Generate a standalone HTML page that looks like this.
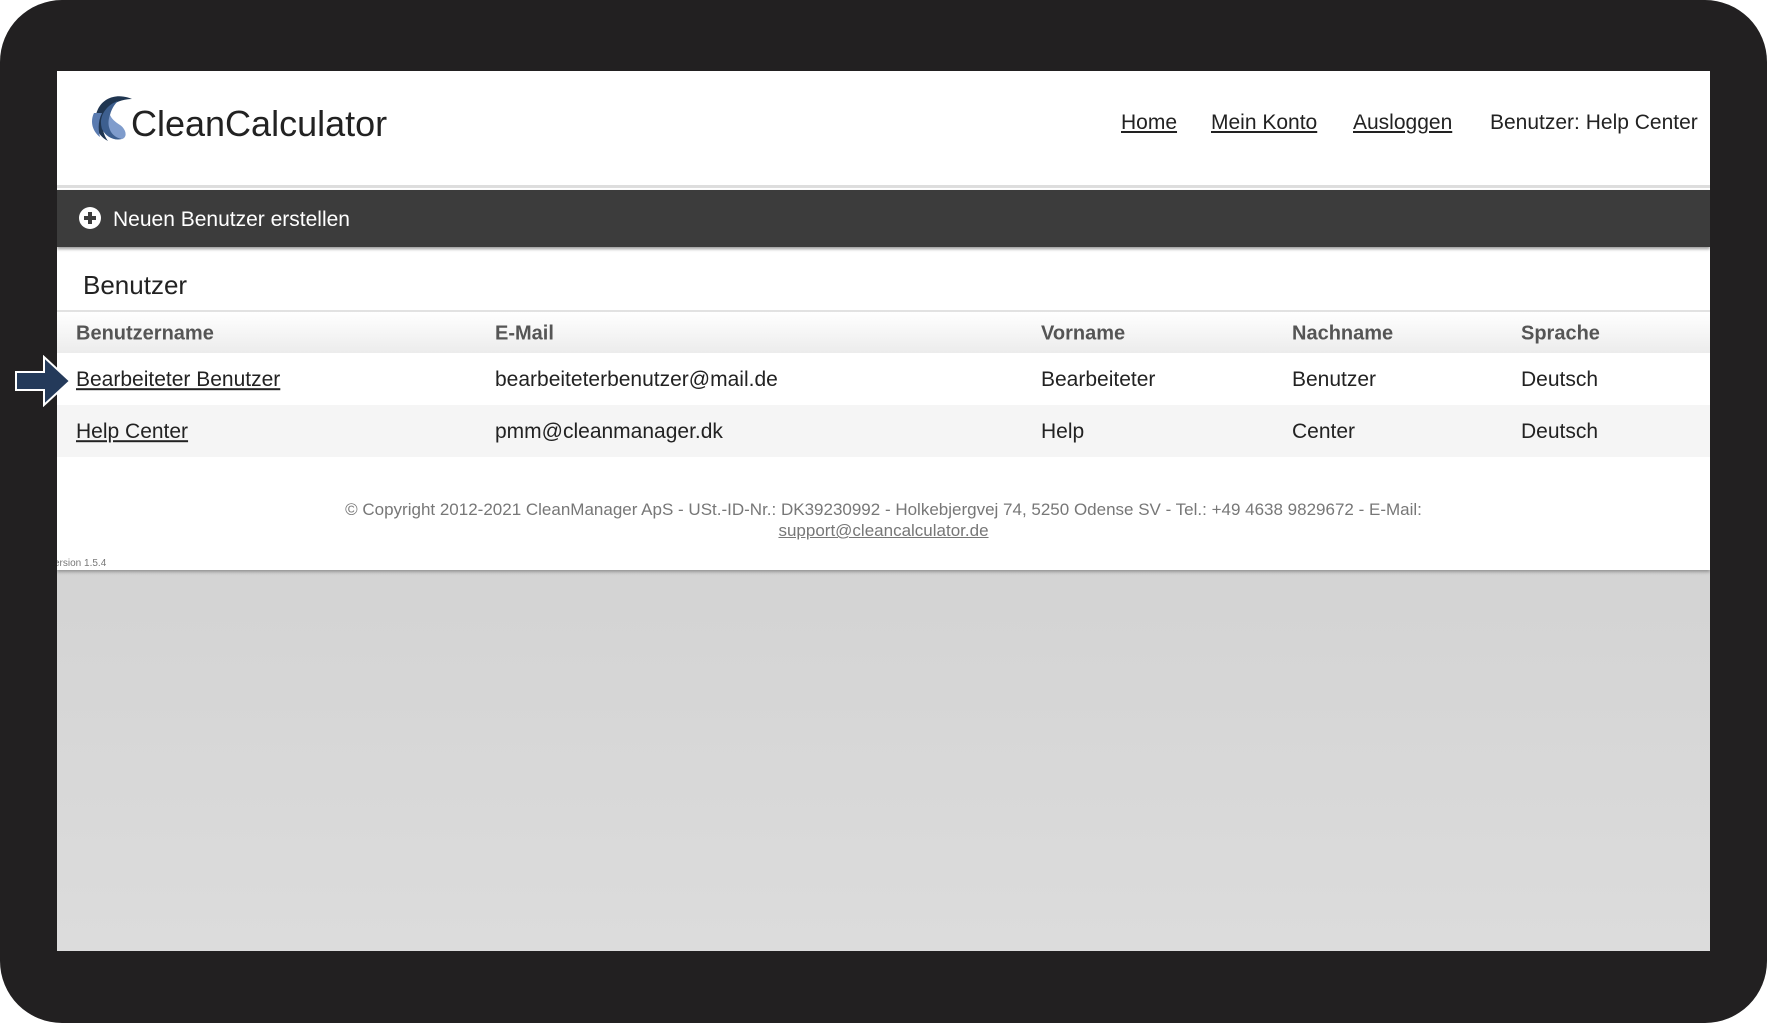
<!DOCTYPE html>
<html><head><meta charset="utf-8"><style>
*{margin:0;padding:0;box-sizing:border-box}
body{width:1767px;height:1023px;background:#fff;font-family:"Liberation Sans",sans-serif;overflow:hidden;position:relative}
.frame{position:absolute;left:0;top:0;width:1767px;height:1023px;background:#222021;border-radius:62px}
.panel{position:absolute;left:57px;top:71px;width:1653px;height:880px;background:linear-gradient(#c8c8c8,#dcdcdc);overflow:hidden}
.white{position:absolute;left:0;top:0;width:100%;height:499px;background:#fff;box-shadow:0 2px 3px rgba(0,0,0,.3)}
.hdr{position:absolute;left:0;top:0;width:100%;height:117px;border-bottom:3px solid #ddd}
.logo{position:absolute;left:74px;top:32px;font-size:36px;color:#222}
.nav{position:absolute;top:40px;font-size:21px;color:#222}
.nav a{color:#222;text-decoration:underline}
.bar{position:absolute;left:0;top:119px;width:100%;height:57px;background:#3c3c3c;color:#fff;font-size:21px;box-shadow:0 2px 3px rgba(0,0,0,.4)}
.title{position:absolute;left:26px;top:199px;font-size:26px;color:#222}
.th{position:absolute;left:0;top:239px;width:100%;height:43px;border-top:2px solid #e2e2e2;background:linear-gradient(#fff,#ececec);font-weight:bold;color:#555;font-size:20px}
.row{position:absolute;left:0;width:100%;height:52px;font-size:21px;color:#222}
.c{position:absolute;top:50%;transform:translateY(-45%);white-space:nowrap}
.row a{color:#222;text-decoration:underline}
.foot{position:absolute;left:0;width:100%;top:428px;text-align:center;font-size:17px;color:#777;line-height:21px}
.foot a{color:#777;text-decoration:underline}
</style></head><body>
<div class="frame"></div>
<div class="panel">
 <div class="white">
  <div class="hdr">
   <svg style="position:absolute;left:31px;top:22px" width="46" height="50" viewBox="0 0 46 50">
    <path d="M44 6C30 0 16 4 10 16C4 28 8 42 20 48C14 40 12 28 18 18C24 10 34 6 44 6Z" fill="#1f3550"/>
    <path d="M30 8C18 12 10 24 14 36C18 44 26 48 34 46C24 42 20 32 22 22C24 14 28 10 30 8Z" fill="#3d5f8f"/>
    <path d="M22 22C18 32 22 44 34 46C40 44 38 36 32 32C26 28 24 26 22 22Z" fill="#7f9ccc"/>
    <path d="M6 20C2 28 4 38 12 44C10 36 10 28 14 20Z" fill="#5a7bb0"/>
   </svg>
   <div class="logo">CleanCalculator</div>
   <div class="nav" style="left:1064px"><a>Home</a></div>
   <div class="nav" style="left:1154px"><a>Mein Konto</a></div>
   <div class="nav" style="left:1296px"><a>Ausloggen</a></div>
   <div class="nav" style="left:1433px">Benutzer: Help Center</div>
  </div>
  <div class="bar">
   <svg style="position:absolute;left:22px;top:17px" width="22" height="22" viewBox="0 0 22 22"><circle cx="11" cy="11" r="11" fill="#fff"/><rect x="5" y="9" width="12" height="4" fill="#3c3c3c"/><rect x="9" y="5" width="4" height="12" fill="#3c3c3c"/></svg>
   <div style="position:absolute;left:56px;top:18px">Neuen Benutzer erstellen</div>
  </div>
  <div class="title">Benutzer</div>
  <div class="th">
   <div class="c" style="left:19px">Benutzername</div><div class="c" style="left:438px">E-Mail</div><div class="c" style="left:984px">Vorname</div><div class="c" style="left:1235px">Nachname</div><div class="c" style="left:1464px">Sprache</div>
  </div>
  <div class="row" style="top:282px;background:#fff">
   <div class="c" style="left:19px"><a>Bearbeiteter Benutzer</a></div><div class="c" style="left:438px">bearbeiteterbenutzer@mail.de</div><div class="c" style="left:984px">Bearbeiteter</div><div class="c" style="left:1235px">Benutzer</div><div class="c" style="left:1464px">Deutsch</div>
  </div>
  <div class="row" style="top:334px;background:#f5f5f5">
   <div class="c" style="left:19px"><a>Help Center</a></div><div class="c" style="left:438px">pmm@cleanmanager.dk</div><div class="c" style="left:984px">Help</div><div class="c" style="left:1235px">Center</div><div class="c" style="left:1464px">Deutsch</div>
  </div>
  <div class="foot">© Copyright 2012-2021 CleanManager ApS - USt.-ID-Nr.: DK39230992 - Holkebjergvej 74, 5250 Odense SV - Tel.: +49 4638 9829672 - E-Mail:<br><a>support@cleancalculator.de</a></div>
  <div style="position:absolute;left:-3px;top:487px;font-size:10px;color:#777">ersion 1.5.4</div>
 </div>
</div>
<svg style="position:absolute;left:14px;top:355px" width="58" height="52" viewBox="0 0 58 52"><path d="M2 17H30V2L56 26L30 50V35H2Z" fill="#243a5a" stroke="#fff" stroke-width="2"/></svg>
</body></html>
